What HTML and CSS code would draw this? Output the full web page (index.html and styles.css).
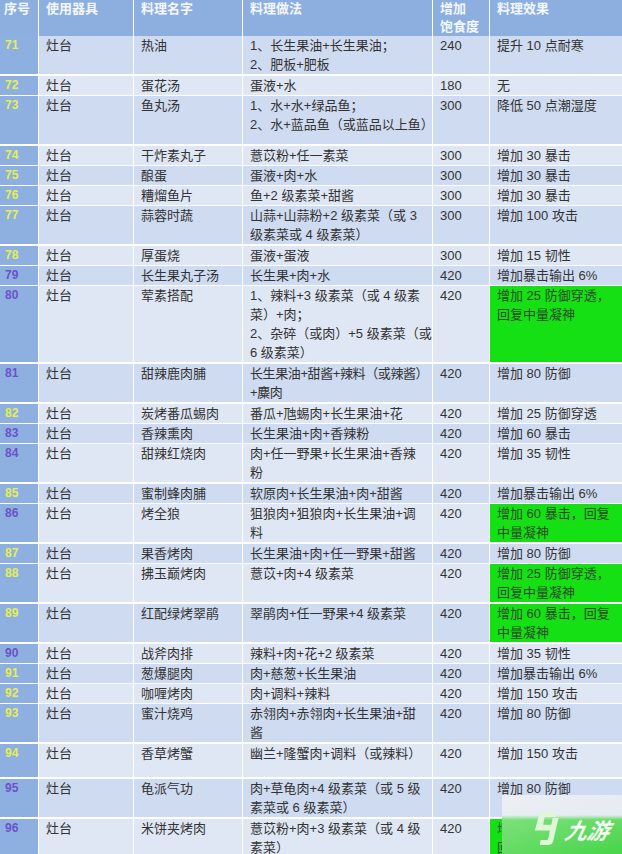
FILE: index.html
```html
<!DOCTYPE html>
<html lang="zh-CN">
<head>
<meta charset="utf-8">
<title>料理表</title>
<link rel="stylesheet" href="styles.css">
</head>
<body>
<div class="sheet">
  <div class="row head">
    <div class="c no">序号</div><div class="c">使用器具</div><div class="c">料理名字</div><div class="c">料理做法</div><div class="c">增加<br>饱食度</div><div class="c">料理效果</div>
  </div>
  <div class="row h2">
    <div class="c no y">71</div><div class="c">灶台</div><div class="c">热油</div><div class="c">1、长生果油+长生果油；<br>2、肥板+肥板</div><div class="c">240</div><div class="c">提升 10 点耐寒</div>
  </div>
  <div class="row">
    <div class="c no y">72</div><div class="c">灶台</div><div class="c">蛋花汤</div><div class="c">蛋液+水</div><div class="c">180</div><div class="c">无</div>
  </div>
  <div class="row h25">
    <div class="c no y">73</div><div class="c">灶台</div><div class="c">鱼丸汤</div><div class="c">1、水+水+绿品鱼；<br>2、水+蓝品鱼（或蓝品以上鱼）</div><div class="c">300</div><div class="c">降低 50 点潮湿度</div>
  </div>
  <div class="row">
    <div class="c no y">74</div><div class="c">灶台</div><div class="c">干炸素丸子</div><div class="c">薏苡粉+任一素菜</div><div class="c">300</div><div class="c">增加 30 暴击</div>
  </div>
  <div class="row">
    <div class="c no y">75</div><div class="c">灶台</div><div class="c">酿蛋</div><div class="c">蛋液+肉+水</div><div class="c">300</div><div class="c">增加 30 暴击</div>
  </div>
  <div class="row">
    <div class="c no y">76</div><div class="c">灶台</div><div class="c">糟熘鱼片</div><div class="c">鱼+2 级素菜+甜酱</div><div class="c">300</div><div class="c">增加 30 暴击</div>
  </div>
  <div class="row h2">
    <div class="c no y">77</div><div class="c">灶台</div><div class="c">蒜蓉时蔬</div><div class="c">山蒜+山蒜粉+2 级素菜（或 3<br>级素菜或 4 级素菜）</div><div class="c">300</div><div class="c">增加 100 攻击</div>
  </div>
  <div class="row">
    <div class="c no y">78</div><div class="c">灶台</div><div class="c">厚蛋烧</div><div class="c">蛋液+蛋液</div><div class="c">300</div><div class="c">增加 15 韧性</div>
  </div>
  <div class="row">
    <div class="c no p">79</div><div class="c">灶台</div><div class="c">长生果丸子汤</div><div class="c">长生果+肉+水</div><div class="c">420</div><div class="c">增加暴击输出 6%</div>
  </div>
  <div class="row h4">
    <div class="c no p">80</div><div class="c">灶台</div><div class="c">荤素搭配</div><div class="c">1、辣料+3 级素菜（或 4 级素<br>菜）+肉；<br>2、杂碎（或肉）+5 级素菜（或<br>6 级素菜）</div><div class="c">420</div><div class="c g">增加 25 防御穿透，<br>回复中量凝神</div>
  </div>
  <div class="row h2">
    <div class="c no p">81</div><div class="c">灶台</div><div class="c">甜辣鹿肉脯</div><div class="c tight">长生果油+甜酱+辣料（或辣酱）<br>+麋肉</div><div class="c">420</div><div class="c">增加 80 防御</div>
  </div>
  <div class="row">
    <div class="c no y">82</div><div class="c">灶台</div><div class="c">炭烤番瓜蜴肉</div><div class="c">番瓜+虺蜴肉+长生果油+花</div><div class="c">420</div><div class="c">增加 25 防御穿透</div>
  </div>
  <div class="row">
    <div class="c no p">83</div><div class="c">灶台</div><div class="c">香辣熏肉</div><div class="c">长生果油+肉+香辣粉</div><div class="c">420</div><div class="c">增加 60 暴击</div>
  </div>
  <div class="row h2">
    <div class="c no p">84</div><div class="c">灶台</div><div class="c">甜辣红烧肉</div><div class="c">肉+任一野果+长生果油+香辣<br>粉</div><div class="c">420</div><div class="c">增加 35 韧性</div>
  </div>
  <div class="row">
    <div class="c no y">85</div><div class="c">灶台</div><div class="c">蜜制蜂肉脯</div><div class="c">软原肉+长生果油+肉+甜酱</div><div class="c">420</div><div class="c">增加暴击输出 6%</div>
  </div>
  <div class="row h2">
    <div class="c no p">86</div><div class="c">灶台</div><div class="c">烤全狼</div><div class="c">狙狼肉+狙狼肉+长生果油+调<br>料</div><div class="c">420</div><div class="c g">增加 60 暴击，回复<br>中量凝神</div>
  </div>
  <div class="row">
    <div class="c no y">87</div><div class="c">灶台</div><div class="c">果香烤肉</div><div class="c">长生果油+肉+任一野果+甜酱</div><div class="c">420</div><div class="c">增加 80 防御</div>
  </div>
  <div class="row h2">
    <div class="c no y">88</div><div class="c">灶台</div><div class="c">拂玉巅烤肉</div><div class="c">薏苡+肉+4 级素菜</div><div class="c">420</div><div class="c g">增加 25 防御穿透，<br>回复中量凝神</div>
  </div>
  <div class="row h2">
    <div class="c no y">89</div><div class="c">灶台</div><div class="c">红配绿烤翠鹃</div><div class="c">翠鹃肉+任一野果+4 级素菜</div><div class="c">420</div><div class="c g">增加 60 暴击，回复<br>中量凝神</div>
  </div>
  <div class="row">
    <div class="c no p">90</div><div class="c">灶台</div><div class="c">战斧肉排</div><div class="c">辣料+肉+花+2 级素菜</div><div class="c">420</div><div class="c">增加 35 韧性</div>
  </div>
  <div class="row">
    <div class="c no y">91</div><div class="c">灶台</div><div class="c">葱爆腿肉</div><div class="c">肉+慈葱+长生果油</div><div class="c">420</div><div class="c">增加暴击输出 6%</div>
  </div>
  <div class="row">
    <div class="c no y">92</div><div class="c">灶台</div><div class="c">咖喱烤肉</div><div class="c">肉+调料+辣料</div><div class="c">420</div><div class="c">增加 150 攻击</div>
  </div>
  <div class="row h2">
    <div class="c no y">93</div><div class="c">灶台</div><div class="c">蜜汁烧鸡</div><div class="c">赤翎肉+赤翎肉+长生果油+甜<br>酱</div><div class="c">420</div><div class="c">增加 80 防御</div>
  </div>
  <div class="row h15">
    <div class="c no y">94</div><div class="c">灶台</div><div class="c">香草烤蟹</div><div class="c">幽兰+隆蟹肉+调料（或辣料）</div><div class="c">420</div><div class="c">增加 150 攻击</div>
  </div>
  <div class="row h2">
    <div class="c no p">95</div><div class="c">灶台</div><div class="c">龟派气功</div><div class="c">肉+草龟肉+4 级素菜（或 5 级<br>素菜或 6 级素菜）</div><div class="c">420</div><div class="c">增加 80 防御</div>
  </div>
  <div class="row h2">
    <div class="c no p">96</div><div class="c">灶台</div><div class="c">米饼夹烤肉</div><div class="c">薏苡粉+肉+3 级素菜（或 4 级<br>素菜）</div><div class="c">420</div><div class="c g">增加 25 防御穿透，<br>回复中量凝神</div>
  </div>
</div>
<div class="mark">
  <svg class="mark-icon" viewBox="0 0 28 34" width="27" height="33" aria-hidden="true">
    <path d="M8 0 H26 L25 5 H13 L11.5 13 H20 L21.5 6 H27.5 L22 30 Q21 34 17 34 H8 L9 29 H15 Q16.5 29 17 27 L18.5 19 H3 Z" fill="#dff7d8"/>
  </svg>
  <span class="mark-text">九游</span>
</div>
</body>
</html>
```

FILE: styles.css
```css
html, body {
  margin: 0;
  padding: 0;
  background: #ffffff;
}

body {
  width: 622px;
  height: 854px;
  overflow: hidden;
  position: relative;
  font-family: "Liberation Sans", "Noto Sans CJK SC", sans-serif;
  font-size: 13px;
  color: #333333;
}

.sheet {
  display: flex;
  flex-direction: column;
  gap: 2px;
  background: #ffffff;
}

.row {
  display: grid;
  grid-template-columns: 38px 94px 108px 189px 56px 1fr;
  column-gap: 1px;
  height: 18px;
}

.row.h2 { height: 38px; }
.row.h25 { height: 48px; }
.row.h15 { height: 33px; }
.row.h4 { height: 76px; }

.c {
  padding: 0 0 0 7px;
  line-height: 19px;
  white-space: nowrap;
  background: #cfdbf0;
}

.row:nth-child(odd) .c {
  background: #dfe7f4;
}

.c.tight {
  letter-spacing: -0.4px;
}

.row .c.no {
  background: #8db0e1;
  padding-left: 5px;
  font-size: 12px;
  font-weight: bold;
}

.no.y { color: #e6ef4d; }
.no.p { color: #6c52c8; }

.row .c.g {
  background: #14e014;
  color: #2c4a2a;
}

.row.head {
  height: 34px;
}

.row.head .c {
  background: #8cafe0;
  color: #f4f7fc;
  font-weight: bold;
  line-height: 18px;
  font-size: 13px;
}

.row.head .c.no {
  padding-left: 4px;
  color: #f4f7fc;
}

.mark {
  position: absolute;
  right: 0;
  bottom: 0;
  width: 120px;
  height: 59px;
  background:
    linear-gradient(to right, rgba(255, 255, 255, 0.2), rgba(255, 255, 255, 0.05)),
    linear-gradient(to bottom, #e6ebf2 0, #e4eaf1 20px, #5ad95a 25px, #3ed23e 100%);
  display: flex;
  align-items: center;
  gap: 7px;
  padding-left: 30px;
  box-sizing: border-box;
  padding-top: 8px;
}

.mark-icon {
  flex: none;
}

.mark-text {
  font-family: "Noto Sans CJK SC", sans-serif;
  font-size: 22px;
  font-weight: bold;
  font-style: italic;
  color: rgba(255, 255, 255, 0.95);
  line-height: 1;
  white-space: nowrap;
  transform: skewX(-12deg);
}
```
